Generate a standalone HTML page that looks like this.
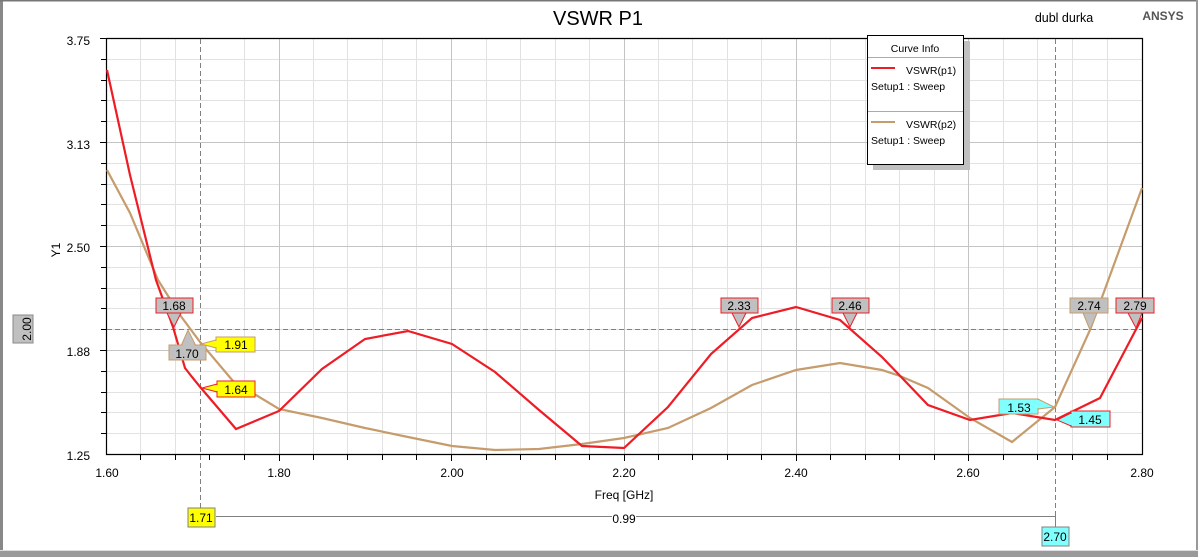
<!DOCTYPE html>
<html><head><style>
html,body{margin:0;padding:0;background:#fff;}
svg{display:block;font-family:"Liberation Sans",Arial,sans-serif;}
</style></head><body>
<svg width="1198" height="557" viewBox="0 0 1198 557" xmlns="http://www.w3.org/2000/svg">
<rect x="0" y="0" width="1198" height="557" fill="#fff"/>
<rect x="0" y="0" width="3" height="557" fill="#888"/>
<rect x="0" y="0" width="1198" height="1.5" fill="#777"/>
<rect x="1196" y="0" width="2" height="557" fill="#999"/>
<rect x="0" y="551" width="1198" height="6" fill="#9a9a9a"/>
<rect x="0" y="550" width="1198" height="1" fill="#ddd"/>

<text x="598" y="25" font-size="20" text-anchor="middle" fill="#000">VSWR P1</text>
<text x="1064" y="22" font-size="12.5" text-anchor="middle" fill="#000">dubl durka</text>
<text x="1163" y="20" font-size="12" font-weight="bold" text-anchor="middle" fill="#555">ANSYS</text>

<g stroke="#e2e2e2" stroke-width="1">
<path d="M140.5 39V454M175.5 39V454M244.5 39V454M313.5 39V454M347.5 39V454M382.5 39V454M416.5 39V454M486.5 39V454M520.5 39V454M555.5 39V454M589.5 39V454M658.5 39V454M692.5 39V454M727.5 39V454M761.5 39V454M830.5 39V454M865.5 39V454M899.5 39V454M934.5 39V454M1003.5 39V454M1037.5 39V454M1072.5 39V454M1107.5 39V454"/>
<path d="M107 59.5H1142M107 80.5H1142M107 100.5H1142M107 121.5H1142M107 163.5H1142M107 184.5H1142M107 204.5H1142M107 225.5H1142M107 267.5H1142M107 288.5H1142M107 308.5H1142M107 329.5H1142M107 371.5H1142M107 392.5H1142M107 412.5H1142M107 433.5H1142"/>
</g>
<g stroke="#c4c4c4" stroke-width="1">
<path d="M279.5 39V454M451.5 39V454M624.5 39V454M796.5 39V454M968.5 39V454"/>
<path d="M107 142.5H1142M107 246.5H1142M107 350.5H1142"/>
</g>
<path d="M106.5 38.5V454.5H1142.5V38.5H106.5" fill="none" stroke="#000" stroke-width="1.2"/>
<g stroke="#000" stroke-width="1">
<path d="M100 38.5H107M101 59.5H107M101 80.5H107M101 100.5H107M101 121.5H107M100 142.5H107M101 163.5H107M101 184.5H107M101 204.5H107M101 225.5H107M100 246.5H107M101 267.5H107M101 288.5H107M101 308.5H107M101 329.5H107M100 350.5H107M101 371.5H107M101 392.5H107M101 412.5H107M101 433.5H107"/>
<path d="M140.5 454V460M175.5 454V460M209.5 454V460M244.5 454V460M279.5 454V461M313.5 454V460M347.5 454V460M382.5 454V460M416.5 454V460M451.5 454V461M486.5 454V460M520.5 454V460M555.5 454V460M589.5 454V460M624.5 454V461M658.5 454V460M692.5 454V460M727.5 454V460M761.5 454V460M796.5 454V461M830.5 454V460M865.5 454V460M899.5 454V460M934.5 454V460M968.5 454V461M1003.5 454V460M1037.5 454V460M1072.5 454V460M1107.5 454V460"/>
</g>
<g font-size="12" fill="#000" text-anchor="end">
<text x="90" y="45">3.75</text><text x="90" y="149">3.13</text><text x="90" y="252">2.50</text><text x="90" y="356">1.88</text><text x="90" y="460">1.25</text>
</g>
<g font-size="12" fill="#000" text-anchor="middle">
<text x="107" y="477">1.60</text><text x="279" y="477">1.80</text><text x="452" y="477">2.00</text><text x="624" y="477">2.20</text><text x="796" y="477">2.40</text><text x="968" y="477">2.60</text><text x="1142" y="477">2.80</text>
<text x="624" y="499">Freq [GHz]</text>
</g>
<text x="60" y="250" font-size="12" text-anchor="middle" transform="rotate(-90 60 250)">Y1</text>

<g stroke="#808080" stroke-width="1" stroke-dasharray="5,3">
<path d="M200.5 39V508M1055.5 39V527M107 329.5H1142"/>
</g>
<path d="M216 516.5H612M636 516.5H1055.5V527" stroke="#808080" fill="none"/>
<text x="624" y="523" font-size="12" text-anchor="middle">0.99</text>

<polyline fill="none" stroke="#c69c6d" stroke-width="2.2" points="107,170 130,213 158,280 180,315 200,342 233,381 279,409 322,418 365,428 408,437 452,446 495,450 539,449 582,444 624,438 668,428 711,408 752,385 796,370 840,363 882,370 900,376 928,388 970,418 1012,442 1055,407 1090,330 1142,188"/>
<polyline fill="none" stroke="#ee1c25" stroke-width="2.2" points="107,70 130,175 156,280 173,327 185,368 192,377 201,388 236,429 279,411 322,369 365,339 408,331 452,344 495,372 539,410 582,446 624,448 668,407 711,354 752,318 796,307 840,320 882,357 928,405 970,420 1012,413 1055,420 1100,398 1142,318"/>

<rect x="13" y="315" width="20" height="28" fill="#c0c0c0" stroke="#888"/>
<text x="27" y="329" font-size="12" text-anchor="middle" transform="rotate(-90 27 329)" dy="4">2.00</text>

<rect x="156" y="298" width="37" height="15" fill="#c0c0c0" stroke="#ee1c25"/>
<polygon points="167,313 181,313 174,327" fill="#c0c0c0" stroke="#ee1c25"/>
<rect x="157" y="299" width="35" height="13" fill="#c0c0c0"/>
<text x="174" y="310" font-size="12" text-anchor="middle">1.68</text>

<polygon points="181,346 188,330 196,346" fill="#c0c0c0" stroke="#c69c6d"/>
<rect x="169" y="345" width="37" height="15" fill="#c0c0c0" stroke="#c69c6d"/>
<polygon points="182,346 188,332 195,346" fill="#c0c0c0"/>
<text x="187" y="358" font-size="12" text-anchor="middle">1.70</text>

<polygon points="201,344 216,340 216,348" fill="#ffff00" stroke="#c69c6d"/>
<rect x="216" y="337" width="39" height="15" fill="#ffff00" stroke="#c69c6d"/>
<rect x="215" y="341" width="3" height="6" fill="#ffff00"/>
<text x="236" y="349" font-size="12" text-anchor="middle">1.91</text>

<polygon points="202,388 217,384 217,392" fill="#ffff00" stroke="#ee1c25"/>
<rect x="217" y="381" width="38" height="16" fill="#ffff00" stroke="#ee1c25"/>
<rect x="216" y="385" width="3" height="6" fill="#ffff00"/>
<text x="236" y="394" font-size="12" text-anchor="middle">1.64</text>

<rect x="188" y="508" width="27" height="19" fill="#ffff00" stroke="#808080"/>
<text x="201" y="522" font-size="12" text-anchor="middle">1.71</text>

<rect x="721" y="298" width="37" height="15" fill="#c0c0c0" stroke="#ee1c25"/>
<polygon points="732,313 746,313 739,327" fill="#c0c0c0" stroke="#ee1c25"/>
<rect x="722" y="299" width="35" height="13" fill="#c0c0c0"/>
<text x="739" y="310" font-size="12" text-anchor="middle">2.33</text>

<rect x="832" y="298" width="37" height="15" fill="#c0c0c0" stroke="#ee1c25"/>
<polygon points="843,313 857,313 850,327" fill="#c0c0c0" stroke="#ee1c25"/>
<rect x="833" y="299" width="35" height="13" fill="#c0c0c0"/>
<text x="850" y="310" font-size="12" text-anchor="middle">2.46</text>

<rect x="1070" y="298" width="38" height="15" fill="#c0c0c0" stroke="#c69c6d"/>
<polygon points="1083,313 1097,313 1090,330" fill="#c0c0c0" stroke="#c69c6d"/>
<rect x="1071" y="299" width="36" height="13" fill="#c0c0c0"/>
<text x="1089" y="310" font-size="12" text-anchor="middle">2.74</text>

<rect x="1116" y="298" width="38" height="15" fill="#c0c0c0" stroke="#ee1c25"/>
<polygon points="1128,313 1142,313 1136,328" fill="#c0c0c0" stroke="#ee1c25"/>
<rect x="1117" y="299" width="36" height="13" fill="#c0c0c0"/>
<text x="1135" y="310" font-size="12" text-anchor="middle">2.79</text>

<rect x="999" y="399" width="39" height="15" fill="#80ffff" stroke="#c69c6d"/>
<polygon points="1038,399 1038,409 1054,407" fill="#80ffff" stroke="#c69c6d"/>
<rect x="1036" y="400" width="3" height="8" fill="#80ffff"/>
<text x="1019" y="412" font-size="12" text-anchor="middle">1.53</text>

<polygon points="1057,420 1071,413 1071,426" fill="#80ffff" stroke="#ee1c25"/>
<rect x="1071" y="411" width="39" height="16" fill="#80ffff" stroke="#ee1c25"/>
<rect x="1070" y="414" width="3" height="11" fill="#80ffff"/>
<text x="1090" y="424" font-size="12" text-anchor="middle">1.45</text>

<rect x="1042" y="527" width="27" height="19" fill="#80ffff" stroke="#808080"/>
<text x="1055" y="541" font-size="12" text-anchor="middle">2.70</text>

<rect x="873" y="41" width="97" height="129" fill="#c0c0c0"/>
<rect x="867.5" y="35.5" width="96" height="129" fill="#fff" stroke="#000"/>
<path d="M868 57.5H963M868 111.5H963" stroke="#aaa"/>
<text x="915" y="52" font-size="10.5" text-anchor="middle">Curve Info</text>
<path d="M871 68H895" stroke="#ee1c25" stroke-width="2"/>
<text x="906" y="74" font-size="10.5">VSWR(p1)</text>
<text x="871" y="90" font-size="10.5">Setup1 : Sweep</text>
<path d="M871 122H895" stroke="#c69c6d" stroke-width="2"/>
<text x="906" y="128" font-size="10.5">VSWR(p2)</text>
<text x="871" y="144" font-size="10.5">Setup1 : Sweep</text>
</svg>
</body></html>
